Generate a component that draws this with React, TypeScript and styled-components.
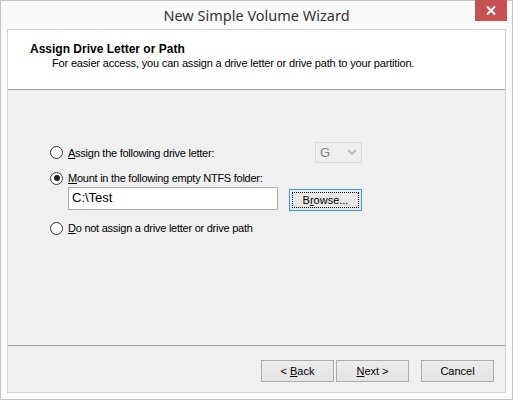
import React from "react";
import styled, { createGlobalStyle } from "styled-components";

const Global = createGlobalStyle`
  html, body { margin: 0; padding: 0; background: #ffffff; }
  * { box-sizing: border-box; }
`;

const Window = styled.div`
  width: 513px;
  height: 400px;
  border: 1px solid #c3c3c3;
  background: #fafafa;
  padding: 0 6px 6px 6px;
  display: flex;
  flex-direction: column;
  font-family: "Liberation Sans", Arial, sans-serif;
  font-size: 11px;
  color: #000;
`;

const TitleBar = styled.div`
  height: 29px;
  display: grid;
  grid-template-columns: 1fr auto 1fr;
  align-items: start;
  margin-top: -1px;
`;

const Title = styled.div`
  grid-column: 2;
  font-family: "Noto Sans", "Open Sans", sans-serif;
  font-size: 14.5px;
  color: #333;
  line-height: 30px;
`;

const CloseButton = styled.div`
  grid-column: 3;
  justify-self: end;
  width: 32px;
  height: 21px;
  background: #c75050;
  display: flex;
  align-items: center;
  justify-content: center;
  margin-right: -1px;
`;

const Client = styled.div`
  flex: 1;
  border: 1px solid #d2d2d2;
  display: flex;
  flex-direction: column;
  background: #f0f0f0;
`;

const Header = styled.div`
  height: 60px;
  background: #ffffff;
  border-bottom: 1px solid #a0a0a0;
  padding: 12px 0 0 22px;
`;

const HeaderTitle = styled.div`
  font-weight: bold;
  font-size: 12px;
  line-height: 14px;
`;

const HeaderSub = styled.div`
  margin-left: 22px;
  margin-top: 1px;
  line-height: 13px;
  letter-spacing: -0.17px;
`;

const Body = styled.div`
  flex: 1;
  border-bottom: 1px solid #a0a0a0;
  padding: 52px 0 0 42px;
  display: flex;
  flex-direction: column;
`;

const Options = styled.div`
  width: 312px;
  display: flex;
  flex-direction: column;
`;

const OptionRow = styled.div<{ $h: number; $mt: number }>`
  height: ${(p) => p.$h}px;
  margin-top: ${(p) => p.$mt}px;
  display: flex;
  align-items: center;
  justify-content: space-between;
`;

const RadioLabel = styled.label`
  display: flex;
  align-items: center;
  gap: 5px;
  letter-spacing: -0.25px;
  white-space: nowrap;
`;

const RadioCircle = styled.span<{ $checked?: boolean }>`
  width: 13px;
  height: 13px;
  border-radius: 50%;
  border: 1px solid #333;
  background: #fff;
  display: flex;
  align-items: center;
  justify-content: center;
  &::after {
    content: "";
    width: 6px;
    height: 6px;
    border-radius: 50%;
    background: ${(p) => (p.$checked ? "#222" : "transparent")};
  }
`;

const U = styled.span`
  text-decoration: underline;
  text-underline-offset: 1px;
`;

const Combo = styled.div`
  width: 47px;
  height: 21px;
  border: 1px solid #d9d9d9;
  background: #efefef;
  display: flex;
  align-items: center;
  justify-content: space-between;
  padding: 0 4px 0 4px;
  color: #838383;
  font-family: "Liberation Sans", Arial, sans-serif;
  font-size: 13px;
`;

const FolderRow = styled.div`
  margin-top: 1px;
  display: flex;
  align-items: flex-start;
  padding-left: 18px;
  gap: 11px;
`;

const TextBox = styled.div`
  width: 210px;
  height: 23px;
  border: 1px solid #abadb3;
  background: #fff;
  font-size: 13px;
  padding: 2px 0 0 3px;
  line-height: 16px;
`;

const Button = styled.div<{ $w: number; $focused?: boolean }>`
  width: ${(p) => p.$w}px;
  height: 22px;
  border: 1px solid ${(p) => (p.$focused ? "#3399ff" : "#acacac")};
  background: linear-gradient(#ececec, #e4e4e4);
  display: flex;
  align-items: center;
  justify-content: center;
  position: relative;
  ${(p) =>
    p.$focused
      ? `&::before {
    content: "";
    position: absolute;
    inset: 2px;
    border: 1px dotted #000;
  }`
      : ""}
`;

const Footer = styled.div`
  height: 46px;
  display: flex;
  justify-content: flex-end;
  align-items: flex-start;
  padding: 14px 11px 0 0;
`;

const ButtonGroup = styled.div<{ $gap: number }>`
  display: flex;
  gap: ${(p) => p.$gap}px;
  margin-left: 12px;
`;

export default function App() {
  return (
    <>
      <Global />
      <Window>
        <TitleBar>
          <Title>New Simple Volume Wizard</Title>
          <CloseButton>
            <svg width="10" height="9" viewBox="0 0 10 9">
              <path d="M1 0.5 L9 8.5 M9 0.5 L1 8.5" stroke="#fff" strokeWidth="2" />
            </svg>
          </CloseButton>
        </TitleBar>
        <Client>
          <Header>
            <HeaderTitle>Assign Drive Letter or Path</HeaderTitle>
            <HeaderSub>
              For easier access, you can assign a drive letter or drive path to your partition.
            </HeaderSub>
          </Header>
          <Body>
            <Options>
              <OptionRow $h={21} $mt={0}>
                <RadioLabel>
                  <RadioCircle />
                  <span>
                    <U>A</U>ssign the following drive letter:
                  </span>
                </RadioLabel>
                <Combo>
                  <span>G</span>
                  <svg width="10" height="7" viewBox="0 0 10 7">
                    <path d="M1 1 L5 5 L9 1" stroke="#bdbdbd" strokeWidth="2" fill="none" />
                  </svg>
                </Combo>
              </OptionRow>
              <OptionRow $h={16} $mt={7}>
                <RadioLabel>
                  <RadioCircle $checked />
                  <span>
                    <U>M</U>ount in the following empty NTFS folder:
                  </span>
                </RadioLabel>
              </OptionRow>
              <FolderRow>
                <TextBox>C:\Test</TextBox>
                <Button $w={73} $focused style={{ marginTop: 2 }}>
                  <span>
                    B<U>r</U>owse...
                  </span>
                </Button>
              </FolderRow>
              <OptionRow $h={16} $mt={9}>
                <RadioLabel>
                  <RadioCircle />
                  <span>
                    <U>D</U>o not assign a drive letter or drive path
                  </span>
                </RadioLabel>
              </OptionRow>
            </Options>
          </Body>
          <Footer>
            <ButtonGroup $gap={2}>
              <Button $w={73}>
                <span>
                  &lt; <U>B</U>ack
                </span>
              </Button>
              <Button $w={73}>
                <span>
                  <U>N</U>ext &gt;
                </span>
              </Button>
            </ButtonGroup>
            <ButtonGroup $gap={0}>
              <Button $w={73}>Cancel</Button>
            </ButtonGroup>
          </Footer>
        </Client>
      </Window>
    </>
  );
}
